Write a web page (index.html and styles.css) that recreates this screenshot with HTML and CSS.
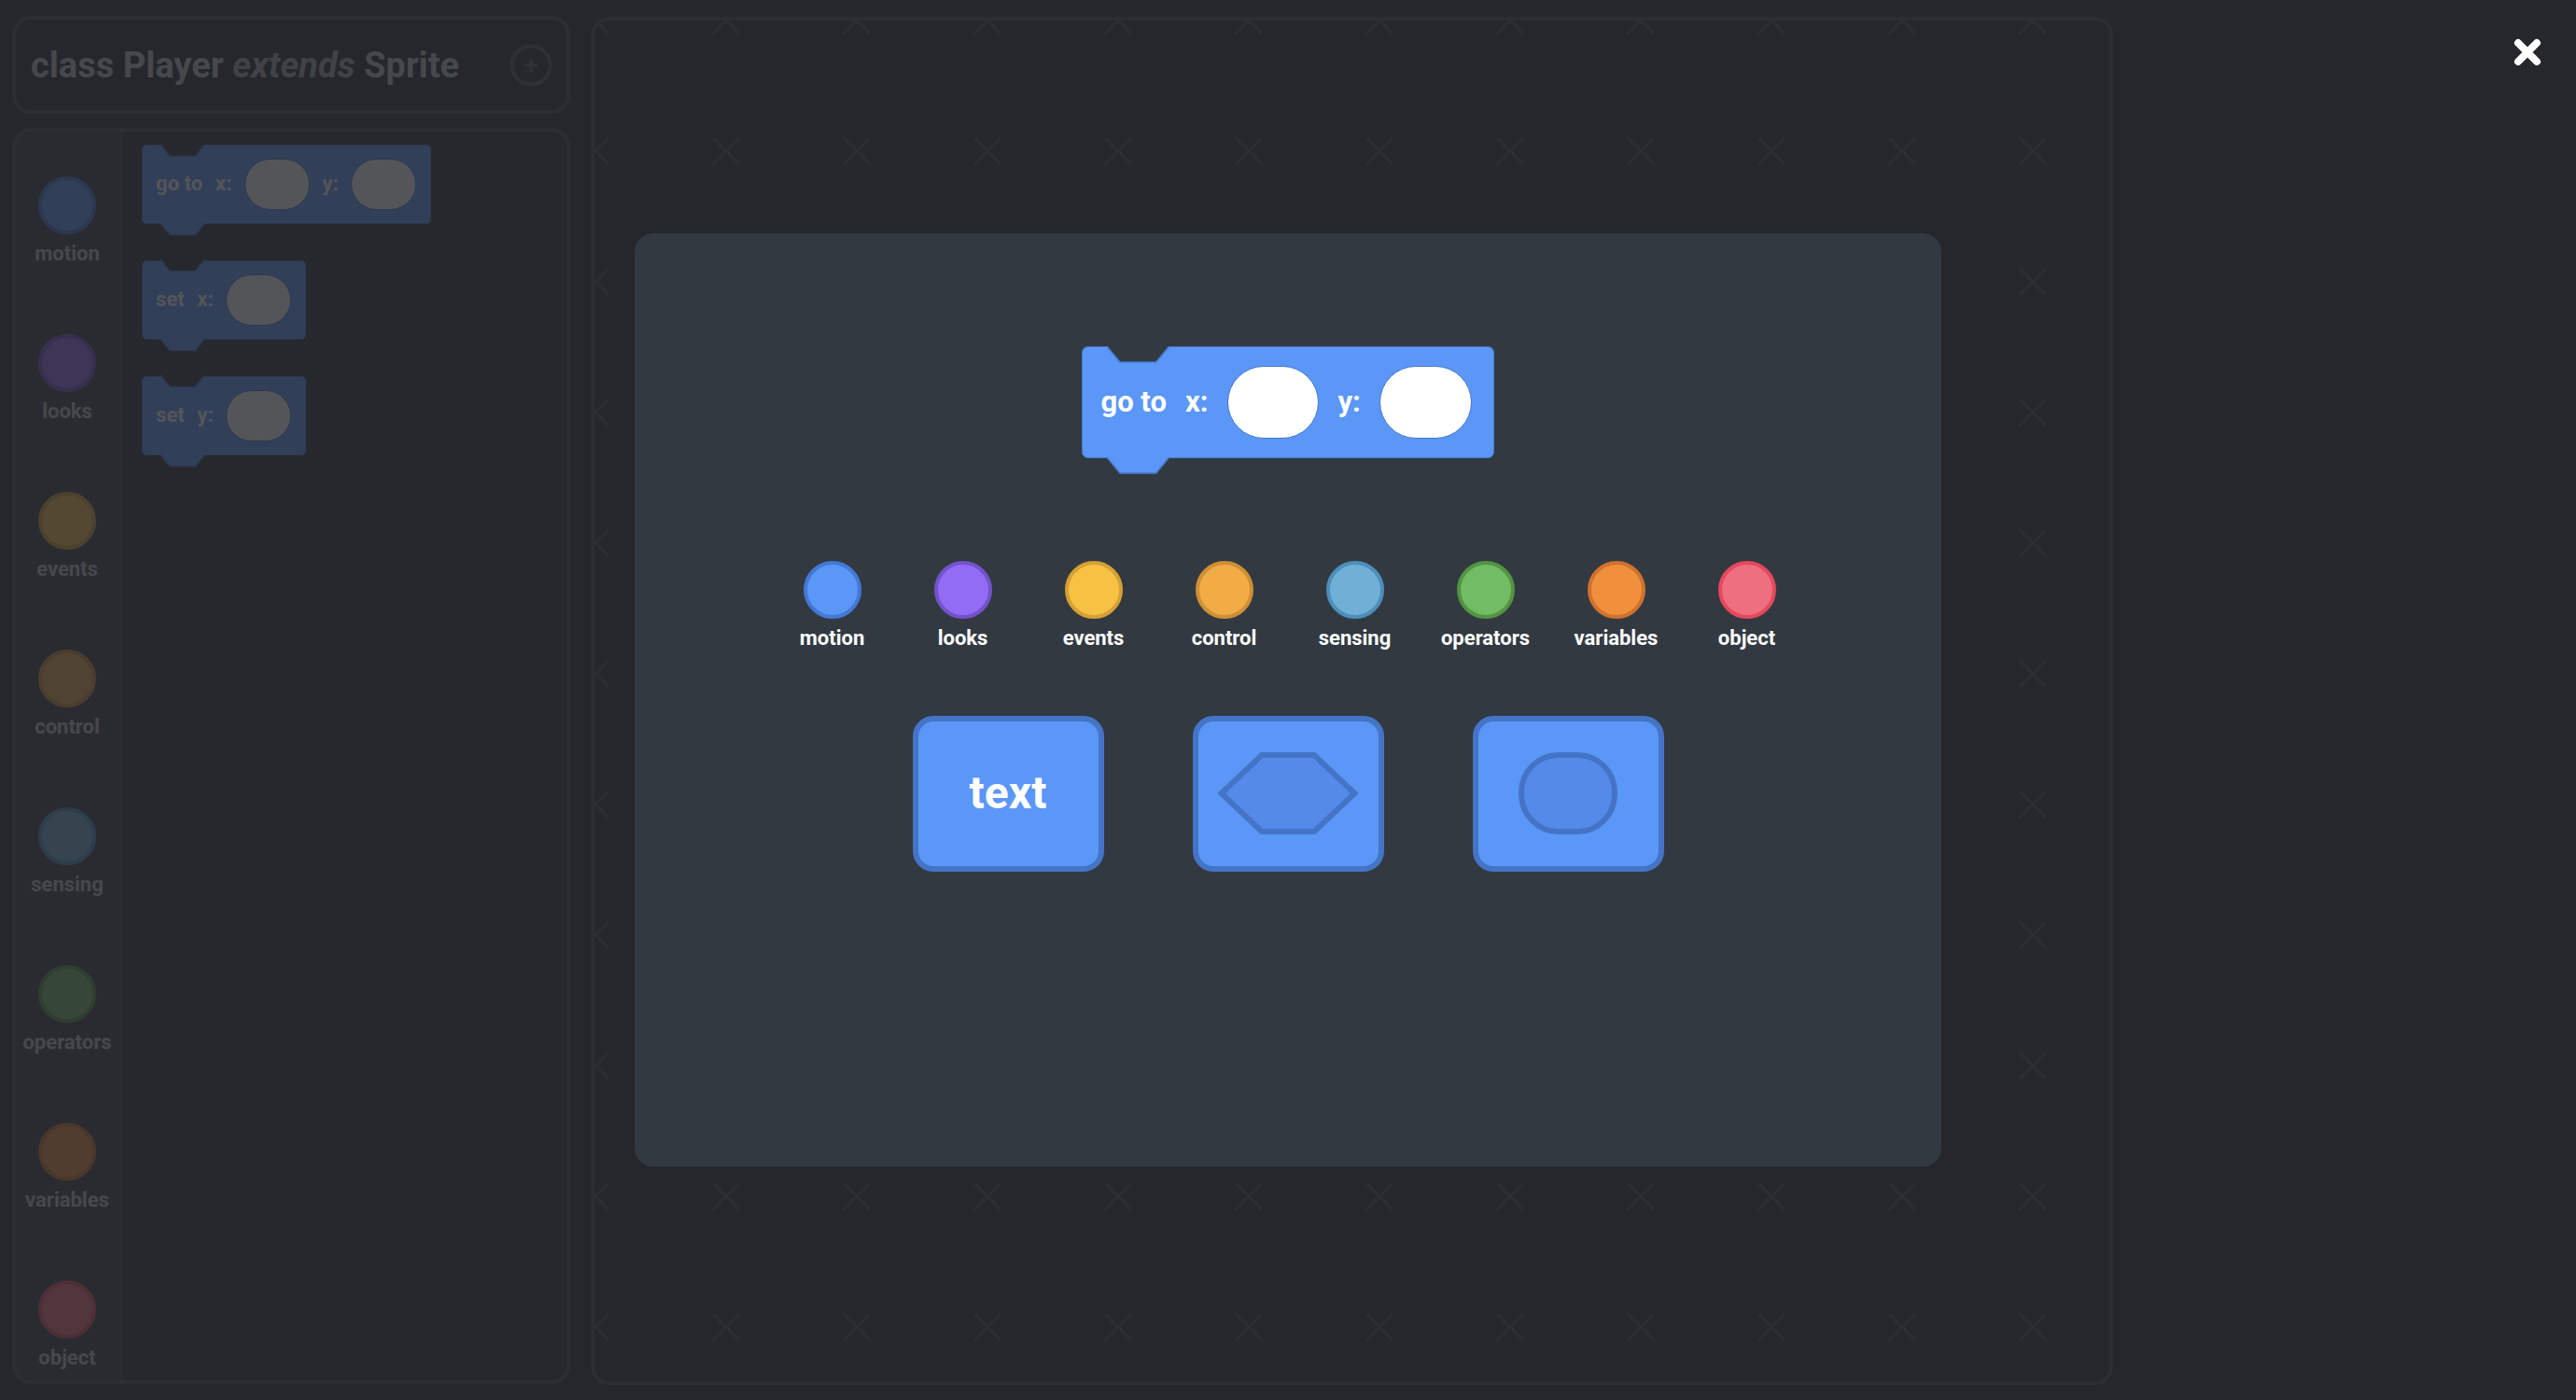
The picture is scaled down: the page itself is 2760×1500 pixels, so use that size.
FILE: index.html
```html
<!DOCTYPE html>
<html lang="en">
<head>
<meta charset="utf-8">
<title>Player – block editor</title>
<link rel="stylesheet" href="styles.css">
</head>
<body>
<div class="app">
  <aside class="sidebar">
    <header class="class-header">
      <h1 class="class-title">class Player <em>extends</em> Sprite</h1>
      <svg class="add-icon" viewBox="0 0 46 46" aria-hidden="true">
        <circle cx="23" cy="23" r="20.5"></circle>
        <path d="M23 16 V30 M16 23 H30"></path>
      </svg>
    </header>
    <section class="palette">
      <nav class="categories">
        <div class="cat"><span class="dot c-motion"></span><span class="cat-label">motion</span></div>
        <div class="cat"><span class="dot c-looks"></span><span class="cat-label">looks</span></div>
        <div class="cat"><span class="dot c-events"></span><span class="cat-label">events</span></div>
        <div class="cat"><span class="dot c-control"></span><span class="cat-label">control</span></div>
        <div class="cat"><span class="dot c-sensing"></span><span class="cat-label">sensing</span></div>
        <div class="cat"><span class="dot c-operators"></span><span class="cat-label">operators</span></div>
        <div class="cat"><span class="dot c-variables"></span><span class="cat-label">variables</span></div>
        <div class="cat"><span class="dot c-object"></span><span class="cat-label">object</span></div>
      </nav>
      <div class="blocks">
        <div class="block">
          <span class="b-text">go to</span><span class="b-text">x:</span><span class="slot"></span><span class="b-text">y:</span><span class="slot"></span>
          <svg class="notch" viewBox="0 0 43 11" preserveAspectRatio="none"><path d="M0 0 L9 11 L34 11 L43 0"></path></svg>
          <svg class="tab" viewBox="0 0 43 11" preserveAspectRatio="none"><path d="M0 0 L9 11 L34 11 L43 0"></path></svg>
        </div>
        <div class="block">
          <span class="b-text">set</span><span class="b-text">x:</span><span class="slot"></span>
          <svg class="notch" viewBox="0 0 43 11" preserveAspectRatio="none"><path d="M0 0 L9 11 L34 11 L43 0"></path></svg>
          <svg class="tab" viewBox="0 0 43 11" preserveAspectRatio="none"><path d="M0 0 L9 11 L34 11 L43 0"></path></svg>
        </div>
        <div class="block">
          <span class="b-text">set</span><span class="b-text">y:</span><span class="slot"></span>
          <svg class="notch" viewBox="0 0 43 11" preserveAspectRatio="none"><path d="M0 0 L9 11 L34 11 L43 0"></path></svg>
          <svg class="tab" viewBox="0 0 43 11" preserveAspectRatio="none"><path d="M0 0 L9 11 L34 11 L43 0"></path></svg>
        </div>
      </div>
    </section>
  </aside>
  <main class="workspace">
    <svg class="grid" aria-hidden="true">
      <defs>
        <pattern id="xgrid" x="-69" y="-70" width="140" height="140" patternUnits="userSpaceOnUse">
          <path d="M56 56 L84 84 M84 56 L56 84"></path>
        </pattern>
      </defs>
      <rect width="100%" height="100%" fill="url(#xgrid)"></rect>
    </svg>
  </main>
</div>

<div class="overlay">
  <button class="close" aria-label="Close">
    <svg viewBox="0 0 30 30"><path d="M5 5 L25 25 M25 5 L5 25"></path></svg>
  </button>
  <div class="modal">
    <div class="block block-lg">
      <span class="b-text">go to</span><span class="b-text">x:</span><span class="slot"></span><span class="b-text">y:</span><span class="slot"></span>
      <svg class="notch" viewBox="0 0 43 11" preserveAspectRatio="none"><path d="M0 0 L9 11 L34 11 L43 0"></path></svg>
      <svg class="tab" viewBox="0 0 43 11" preserveAspectRatio="none"><path d="M0 0 L9 11 L34 11 L43 0"></path></svg>
    </div>
    <div class="cat-row">
      <div class="cat"><span class="dot c-motion"></span><span class="cat-label">motion</span></div>
      <div class="cat"><span class="dot c-looks"></span><span class="cat-label">looks</span></div>
      <div class="cat"><span class="dot c-events"></span><span class="cat-label">events</span></div>
      <div class="cat"><span class="dot c-control"></span><span class="cat-label">control</span></div>
      <div class="cat"><span class="dot c-sensing"></span><span class="cat-label">sensing</span></div>
      <div class="cat"><span class="dot c-operators"></span><span class="cat-label">operators</span></div>
      <div class="cat"><span class="dot c-variables"></span><span class="cat-label">variables</span></div>
      <div class="cat"><span class="dot c-object"></span><span class="cat-label">object</span></div>
    </div>
    <div class="shapes">
      <button class="shape-btn"><span class="shape-text">text</span></button>
      <button class="shape-btn" aria-label="boolean">
        <svg class="shape-hex" viewBox="0 0 150 88"><polygon points="3.5,44 47,3 103,3 146.5,44 103,85 47,85"></polygon></svg>
      </button>
      <button class="shape-btn" aria-label="reporter">
        <svg class="shape-oval" viewBox="0 0 106 88"><rect x="3" y="3" width="100" height="82" rx="40" ry="40"></rect></svg>
      </button>
    </div>
  </div>
</div>
</body>
</html>
```

FILE: styles.css
```css
* { box-sizing: border-box; }

html, body {
  margin: 0;
  height: 1500px;
  overflow: hidden;
}

body {
  background: #26272c;
  font-family: Roboto, "Liberation Sans", Arial, sans-serif;
}

/* ---------- underlying editor ---------- */
.app {
  display: flex;
  align-items: flex-start;
  height: 1500px;
  padding: 17px 0 17px 13px;
}

.sidebar {
  width: 598px;
  height: 100%;
  display: flex;
  flex-direction: column;
  gap: 15px;
}

.class-header {
  height: 105px;
  flex: none;
  border: 4px solid #3e4857;
  border-radius: 20px;
  display: flex;
  align-items: center;
  justify-content: space-between;
  padding: 0 15px 0 16px;
}

.class-title {
  margin: 0;
  font-size: 38px;
  font-weight: 700;
  color: #babfc4;
  white-space: nowrap;
}

.class-title em {
  font-style: italic;
  color: #9ea4aa;
}

.add-icon {
  width: 46px;
  height: 46px;
  fill: none;
  stroke: #4c525c;
  stroke-width: 4;
}

.add-icon path { stroke-width: 3.5; }

.palette {
  flex: 1;
  min-height: 0;
  display: flex;
  border: 4px solid #3e4857;
  border-radius: 20px;
  overflow: hidden;
  background: #2b2c31;
}

.categories {
  width: 114px;
  flex: none;
  background: #393a44;
  padding: 11px 4px 0 0;
  display: flex;
  flex-direction: column;
}

.cat {
  display: flex;
  flex-direction: column;
  align-items: center;
}

.categories .cat {
  flex: none;
  height: 169px;
  padding-top: 37px;
}

.dot {
  width: 62px;
  height: 62px;
  border-radius: 50%;
  border: 4px solid;
}

.cat-label {
  margin-top: 8px;
  font-size: 22px;
  line-height: 26px;
  font-weight: 700;
  color: #babfc4;
}

.c-motion    { background: #5b97f7; border-color: #4379d4; }
.c-looks     { background: #936cf5; border-color: #7253c9; }
.c-events    { background: #f7c143; border-color: #d6a134; }
.c-control   { background: #f2ac46; border-color: #cf8f36; }
.c-sensing   { background: #70b0d6; border-color: #4d8fbb; }
.c-operators { background: #72bc63; border-color: #539441; }
.c-variables { background: #f0903d; border-color: #cf722e; }
.c-object    { background: #ee6f80; border-color: #e6495c; }

.blocks {
  flex: 1;
  padding: 14px 21px;
  display: flex;
  flex-direction: column;
  align-items: flex-start;
  gap: 39px;
  --under: #2b2c31;
}

.workspace {
  position: relative;
  margin-left: 22px;
  margin-top: 1px;
  width: 1631px;
  height: 1466px;
  border: 4px solid #3e4857;
  border-radius: 20px;
  overflow: hidden;
}

.grid {
  position: absolute;
  inset: 0;
  width: 100%;
  height: 100%;
}

.grid path {
  stroke: #434852;
  stroke-width: 3;
  fill: none;
}

/* ---------- code block ---------- */
.block {
  position: relative;
  display: inline-flex;
  align-items: center;
  gap: 0.62em;
  height: 3.86em;
  padding: 0 0.68em 0 0.64em;
  background: #5b97f7;
  border: 1.5px solid #4677cc;
  border-radius: 0.22em;
  color: #ffffff;
  font-size: 22px;
  font-weight: 700;
  line-height: 1;
  white-space: nowrap;
}

.b-text { display: block; }

.slot {
  width: 3.18em;
  height: 2.52em;
  border-radius: 1.26em;
  background: #ffffff;
  border: 1.5px solid #4677cc;
}

.notch, .tab {
  position: absolute;
  left: 0.85em;
  width: 2.15em;
  height: calc(0.5em + 1.5px);
  overflow: visible;
}

.notch { top: -1.5px; }
.tab { top: 100%; }

.notch path,
.tab path {
  stroke: #4677cc;
  stroke-width: 1.5px;
  vector-effect: non-scaling-stroke;
  stroke-linejoin: round;
}

.notch path { fill: var(--under); }
.tab path { fill: #5b97f7; }

/* ---------- modal ---------- */
.overlay {
  position: fixed;
  inset: 0;
  background: rgba(38, 39, 44, 0.79);
  display: flex;
  align-items: center;
  justify-content: center;
}

.close {
  position: absolute;
  top: 41px;
  right: 37px;
  width: 30px;
  height: 30px;
  padding: 0;
  border: 0;
  background: none;
}

.close svg {
  display: block;
  width: 30px;
  height: 30px;
  stroke: #ffffff;
  stroke-width: 8;
  stroke-linecap: round;
  fill: none;
}

.modal {
  width: 1400px;
  height: 1000px;
  background: #323941;
  border-radius: 20px;
  display: flex;
  flex-direction: column;
  align-items: center;
  padding-top: 121px;
  --under: #323941;
}

.block-lg {
  font-size: 31px;
  gap: 0.65em;
  padding: 0 0.77em 0 0.64em;
  margin-bottom: 110px;
}

.cat-row {
  display: flex;
  padding-left: 3px;
  margin-bottom: 70px;
}

.cat-row .cat { width: 140px; }
.cat-row .cat-label { color: #ffffff; }

.shapes {
  display: flex;
  gap: 95px;
}

.shape-btn {
  width: 205px;
  height: 167px;
  padding: 0;
  border: 6px solid #4474c6;
  border-radius: 22px;
  background: #5b97f7;
  display: flex;
  align-items: center;
  justify-content: center;
  font-family: inherit;
}

.shape-text {
  color: #ffffff;
  font-size: 48px;
  font-weight: 700;
  line-height: 1;
}

.shape-hex {
  width: 150px;
  height: 88px;
}

.shape-oval {
  width: 106px;
  height: 88px;
}

.shape-hex polygon,
.shape-oval rect {
  fill: #558ae9;
  stroke: #4474c6;
  stroke-width: 6;
}
```
